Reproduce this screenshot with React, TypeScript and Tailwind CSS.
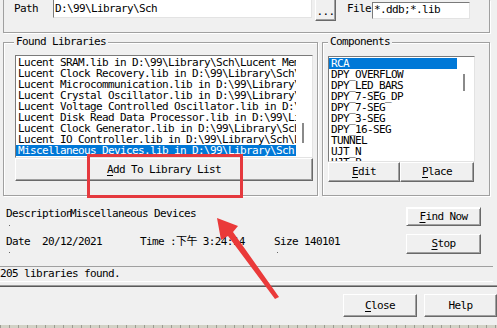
import type { ReactNode } from "react";

const libraries = [
  "Lucent SRAM.lib in D:\\99\\Library\\Sch\\Lucent Memory.ddb",
  "Lucent Clock Recovery.lib in D:\\99\\Library\\Sch\\Lucent.ddb",
  "Lucent Microcommunication.lib in D:\\99\\Library\\Sch",
  "Lucent Crystal Oscillator.lib in D:\\99\\Library\\Sch",
  "Lucent Voltage Controlled Oscillator.lib in D:\\99",
  "Lucent Disk Read Data Processor.lib in D:\\99\\Library",
  "Lucent Clock Generator.lib in D:\\99\\Library\\Sch",
  "Lucent IO Controller.lib in D:\\99\\Library\\Sch\\Lucent",
  "Miscellaneous Devices.lib in D:\\99\\Library\\Sch",
];

const components = [
  "RCA",
  "DPY_OVERFLOW",
  "DPY_LED_BARS",
  "DPY_7-SEG_DP",
  "DPY_7-SEG",
  "DPY_3-SEG",
  "DPY_16-SEG",
  "TUNNEL",
  "UJT_N",
  "UJT_P",
];

const raised =
  "flex items-center justify-center bg-[#f0f0f0] border border-t-white border-l-white border-r-[#696969] border-b-[#696969] shadow-[inset_-1px_-1px_0_#a0a0a0]";
const sunken =
  "bg-white border border-t-[#7a7a7a] border-l-[#7a7a7a] border-r-[#e3e3e3] border-b-[#e3e3e3]";
const etched = "border border-[#a0a0a0] shadow-[inset_1px_1px_0_#fff,1px_1px_0_#fff]";

function Btn({ children, className = "" }: { children: ReactNode; className?: string }) {
  return <div className={`${raised} ${className}`}>{children}</div>;
}

function Key({ k }: { k: string }) {
  return <span className="underline underline-offset-2">{k}</span>;
}

export default function App() {
  return (
    <div className="relative w-[497px] h-[328px] overflow-hidden bg-[#f0f0f0] text-black font-['DejaVu_Sans_Mono','Noto_Sans_CJK_SC',monospace] text-[11px] tracking-[-0.62px] leading-[12px]">
      {/* search options */}
      <div className="ml-[3px] w-[487px] h-[33px] border-x border-b border-[#a0a0a0] shadow-[1px_1px_0_#fff] flex items-start">
        <span className="w-[49px] pl-[10px] pt-[3px]">Path</span>
        <div className={`${sunken} -mt-[2px] w-[259px] h-[20px] pl-[1px] pt-[4px] whitespace-nowrap`}>
          {"D:\\99\\Library\\Sch"}
        </div>
        <Btn className="ml-[3px] -mt-px w-[21px] h-[22px] pt-[4px]">...</Btn>
        <span className="ml-[11px] w-[25px] pt-[3px] overflow-hidden whitespace-nowrap">File</span>
        <div className={`${sunken} mt-[2px] w-[98px] h-[17px] pl-[1px] pt-[1px] whitespace-nowrap`}>
          *.ddb;*.lib
        </div>
      </div>

      {/* libraries and components */}
      <div className="mt-[3px] flex items-start">
        <fieldset className={`${etched} ml-[3px] w-[315px] h-[160px]`}>
          <legend className="ml-[10px] px-[2px] bg-[#f0f0f0]">Found Libraries</legend>
          <div className={`${sunken} ml-[11px] mt-[7px] w-[298px] h-[103px] flex overflow-hidden`}>
            <div className="w-[280px] pt-px overflow-hidden">
              {libraries.map((lib, i) => (
                <div
                  key={i}
                  className={`h-[11px] leading-[11px] pl-px whitespace-nowrap ${
                    i === libraries.length - 1 ? "bg-[#0078d7] text-white" : ""
                  }`}
                >
                  <span className="pl-px">{lib}</span>
                </div>
              ))}
            </div>
            <div className="flex-1 relative">
              <div className="absolute left-[6px] top-[67px] w-[2px] h-[20px] bg-[#8a8a8a]" />
            </div>
          </div>
          <Btn className="ml-[11px] w-[298px] h-[23px]">
            <span>
              <Key k="A" />dd To Library List
            </span>
          </Btn>
        </fieldset>

        <fieldset className={`${etched} ml-[4px] w-[168px] h-[160px]`}>
          <legend className="ml-[5px] px-[2px] bg-[#f0f0f0]">Components</legend>
          <div className={`${sunken} ml-[5px] mt-[8px] w-[147px] h-[106px] flex overflow-hidden`}>
            <div className="w-[128px] pt-px overflow-hidden">
              {components.map((c, i) => (
                <div
                  key={c}
                  className={`h-[11px] leading-[11px] pl-[2px] whitespace-nowrap ${
                    i === 0 ? "bg-[#0078d7] text-white" : ""
                  }`}
                >
                  {c}
                </div>
              ))}
            </div>
            <div className="flex-1 relative">
              <div className="absolute left-[6px] top-[17px] w-[2px] h-[17px] bg-[#8a8a8a]" />
            </div>
          </div>
          <div className="ml-[5px] flex">
            <Btn className="w-[72px] h-[20px]">
              <span>
                <Key k="E" />dit
              </span>
            </Btn>
            <Btn className="w-[74px] h-[20px]">
              <span>
                <Key k="P" />lace
              </span>
            </Btn>
          </div>
        </fieldset>
      </div>

      {/* details */}
      <div className="h-[70px] flex">
        <div className="w-[406px] pl-[6px] pt-[12px] whitespace-nowrap">
          <div className="flex">
            <span className="inline-block w-[64px]">Description</span>
            <span>Miscellaneous Devices</span>
          </div>
          <div className="ml-[3px] mt-[5px] w-px h-px bg-[#666]" />
          <div className="mt-[10px] flex">
            <span className="w-[36px]">Date</span>
            <span className="w-[98px]">20/12/2021</span>
            <span className="w-[134px]">Time :下午 3:24:14</span>
            <span>Size 140101</span>
          </div>
          <div className="mt-[4px] flex">
            <div className="ml-[3px] w-px h-px bg-[#666]" />
            <div className="ml-[267px] w-px h-px bg-[#666]" />
          </div>
        </div>
        <div className="flex flex-col">
          <Btn className="mt-[11px] w-[75px] h-[19px] border-[#5a5a5a] shadow-[inset_1px_1px_0_#fff,inset_-1px_-1px_0_#a0a0a0]">
            <span>
              <Key k="F" />ind Now
            </span>
          </Btn>
          <Btn className="mt-[8px] w-[75px] h-[20px]">
            <span>
              <Key k="S" />top
            </span>
          </Btn>
        </div>
      </div>

      {/* status */}
      <div className="w-[493px] h-[16px] border-t border-b border-t-[#a0a0a0] border-b-white leading-[14px] whitespace-nowrap">
        205 libraries found.
      </div>
      <div className="mt-[3px] h-[2px] border-t border-b border-t-[#9a9a9a] border-b-[#5a5a5a]" />

      <div className="mt-[7px] flex justify-end gap-[7px]">
        <Btn className="w-[74px] h-[23px]">
          <span>
            <Key k="C" />lose
          </span>
        </Btn>
        <Btn className="w-[73px] h-[23px]">Help</Btn>
      </div>

      <div className="mt-[8px] h-[4px] bg-[repeating-linear-gradient(90deg,#9c9c92_0_1px,#d2d2c6_1px_9px)]" />

      {/* annotation */}
      <div className="absolute left-[87px] top-[154px] w-[156px] h-[44px] border-[3px] border-[#e5393e]" />
      <svg className="absolute left-0 top-0 pointer-events-none" width="497" height="328">
        <polygon
          points="217,218 238,226 233,232 279,297 275,299 228,236 221,240"
          fill="#ea3a3a"
        />
      </svg>
    </div>
  );
}
